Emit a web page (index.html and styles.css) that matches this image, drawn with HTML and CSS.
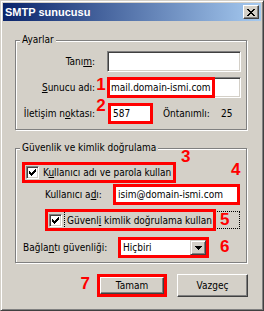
FILE: index.html
```html
<!DOCTYPE html>
<html>
<head>
    <title>SMTP sunucusu</title>
    <link rel="stylesheet" href="styles.css">
</head>
<body>
<div class="window">
    <div class="titlebar">
        <span class="title">SMTP sunucusu</span>
        <button class="close-btn">
            <svg width="8" height="7" viewBox="0 0 8 7"><path d="M0 0h2v1H0zM6 0h2v1H6zM1 1h2v1H1zM5 1h2v1H5zM2 2h4v1H2zM3 3h2v1H3zM2 4h4v1H2zM1 5h2v1H1zM5 5h2v1H5zM0 6h2v1H0zM6 6h2v1H6z" fill="#000"/></svg>
        </button>
    </div>

    <div class="dialog">
        <!-- Ayarlar -->
        <div class="group settings">
            <span class="legend">Ayarlar</span>
            <div class="row">
                <label class="field-label">Tanı<u>m</u>:</label>
                <span class="num-col"></span>
                <input type="text" class="field field-wide">
            </div>
            <div class="row">
                <label class="field-label"><u>S</u>unucu adı:</label>
                <span class="num-col"><span class="num num-1">1</span></span>
                <span class="field-wrap">
                    <input type="text" class="field field-wide" value="mail.domain-ismi.com">
                    <span class="mark-box server-mark"></span>
                </span>
            </div>
            <div class="row">
                <label class="field-label">İletişim n<u>o</u>ktası:</label>
                <span class="num-col"><span class="num num-2">2</span></span>
                <input type="text" class="field marked port-field" value="587">
                <span class="default-label">Öntanımlı:</span>
                <span>25</span>
            </div>
        </div>

        <!-- Güvenlik ve kimlik doğrulama -->
        <div class="group security">
            <span class="legend">Güvenlik ve kimlik doğrulama</span>
            <span class="num num-3">3</span>
            <span class="num num-4">4</span>

            <div class="row auth-row">
                <label class="check marked">
                    <span class="checkbox">
                        <svg width="9" height="9" viewBox="0 0 9 9"><path d="M7 1h1v1H7zM6 2h2v1H6zM1 3h1v1H1zM5 3h3v1H5zM1 4h2v1H1zM4 4h3v1H4zM1 5h5v1H1zM2 6h3v1H2zM3 7h1v1H3z" fill="#000"/></svg>
                    </span>
                    <span>K<u>u</u>llanıcı adı ve parola kullan</span>
                </label>
            </div>

            <div class="row user-row">
                <label class="user-label">Kullanıcı a<u>d</u>ı:</label>
                <input type="text" class="field marked user-field" value="isim@domain-ismi.com">
            </div>

            <div class="row secure-row">
                <span class="checkbox">
                    <svg width="9" height="9" viewBox="0 0 9 9"><path d="M7 1h1v1H7zM6 2h2v1H6zM1 3h1v1H1zM5 3h3v1H5zM1 4h2v1H1zM4 4h3v1H4zM1 5h5v1H1zM2 6h3v1H2zM3 7h1v1H3z" fill="#000"/></svg>
                </span>
                <span class="focus"><span>Güvenl<u>i</u> kimlik doğrulama kullan</span></span>
                <span class="mark-box secure-mark"></span>
                <span class="num num-5">5</span>
            </div>

            <div class="row conn-row">
                <label class="conn-label">Bağla<u>n</u>tı güvenliği:</label>
                <span class="select marked">
                    <span class="select-text">Hiçbiri</span>
                    <span class="drop-btn">
                        <svg width="7" height="4" viewBox="0 0 7 4"><path d="M0 0h7v1H0zM1 1h5v1H1zM2 2h3v1H2zM3 3h1v1H3z" fill="#000"/></svg>
                    </span>
                </span>
                <span class="num num-6">6</span>
            </div>
        </div>

        <div class="buttons">
            <span class="num num-7">7</span>
            <span class="btn-mark"><button class="btn">Tamam</button></span>
            <button class="btn">Vazgeç</button>
        </div>
    </div>
</div>
</body>
</html>
```

FILE: styles.css
```css
* {
    box-sizing: border-box;
}

body {
    margin: 0;
    background-color: #d4d0c8;
    font-family: "DejaVu Sans Condensed", "DejaVu Sans", sans-serif;
    font-stretch: condensed;
    font-size: 10px;
    color: #000;
}

u {
    text-decoration: underline;
}

.window {
    width: 264px;
    height: 311px;
    padding: 2px;
    border: 1px solid;
    border-color: #d4d0c8 #404040 #404040 #d4d0c8;
    box-shadow: inset 1px 1px 0 #fff, inset -1px -1px 0 #808080;
    background-color: #d4d0c8;
}

/* barra de titulo */
.titlebar {
    height: 18px;
    display: flex;
    align-items: center;
    justify-content: space-between;
    padding: 0 2px;
    background: linear-gradient(to right, #0a246a, #a6caf0);
}

.title {
    color: #fff;
    font-family: "Liberation Sans", Arial, sans-serif;
    font-weight: bold;
    font-size: 11px;
}

.close-btn {
    width: 16px;
    height: 14px;
    padding: 0;
    display: flex;
    align-items: center;
    justify-content: center;
    border: 1px solid;
    border-color: #fff #404040 #404040 #fff;
    box-shadow: inset -1px -1px 0 #808080;
    background-color: #d4d0c8;
}

/* grupos */
.group {
    position: relative;
    width: 232px;
    margin-left: 12px;
    border: 1px solid #808080;
    box-shadow: inset 1px 1px 0 #fff, 1px 1px 0 #fff;
}

.legend {
    position: absolute;
    top: -7px;
    left: 4px;
    padding: 0 2px;
    line-height: 12px;
    background-color: #d4d0c8;
}

.settings {
    margin-top: 19px;
    padding: 10px 0 5px 0;
}

.security {
    margin-top: 18px;
    padding: 13px 0 4px 0;
}

.row {
    position: relative;
    display: flex;
    align-items: center;
    height: 21px;
}

.settings .row + .row {
    margin-top: 5px;
}

.field-label {
    width: 79px;
    text-align: right;
}

.num-col {
    width: 12px;
    align-self: stretch;
    display: flex;
    justify-content: center;
}

/* numeros rojos */
.num {
    color: #ff0000;
    font-family: "Liberation Sans", Arial, sans-serif;
    font-weight: bold;
    font-size: 17px;
    line-height: 13px;
}

.num-1 {
    margin-top: 1px;
}

.num-2 {
    margin-top: -4px;
}

.num-3 {
    position: absolute;
    top: 1px;
    left: 165px;
}

.num-4 {
    position: absolute;
    top: 14px;
    left: 215px;
}

.num-5 {
    position: absolute;
    top: 4px;
    left: 204px;
}

.num-6 {
    align-self: flex-start;
    margin: 3px 0 0 11px;
}

.num-7 {
    margin: 3px 7px 0 0;
    align-self: flex-start;
}

/* campos */
.field {
    height: 21px;
    padding: 0 3px;
    font: inherit;
    color: #000;
    background-color: #fff;
    border: 1px solid;
    border-color: #808080 #fff #fff #808080;
    box-shadow: inset 1px 1px 0 #404040, inset -1px -1px 0 #d4d0c8;
    outline: none;
}

.field.marked {
    border: 3px solid #ff0000;
    box-shadow: none;
    padding: 0 2px;
}

.field-wide {
    width: 134px;
}

.field-wrap {
    position: relative;
    display: flex;
}

.mark-box {
    position: absolute;
    border: 3px solid #ff0000;
}

.server-mark {
    top: 0;
    left: 0;
    width: 108px;
    height: 21px;
}

.port-field {
    width: 45px;
    margin-left: 1px;
}

.default-label {
    width: 58px;
    margin-left: 10px;
}

/* casillas */
.checkbox {
    width: 13px;
    height: 13px;
    flex-shrink: 0;
    display: flex;
    align-items: center;
    justify-content: center;
    background-color: #fff;
    border: 1px solid;
    border-color: #808080 #fff #fff #808080;
    box-shadow: inset 1px 1px 0 #404040, inset -1px -1px 0 #d4d0c8;
}

.auth-row {
    padding-left: 6px;
}

.check.marked {
    display: flex;
    align-items: center;
    gap: 4px;
    width: 154px;
    height: 21px;
    padding: 0 0 0 1px;
    white-space: nowrap;
    border: 3px solid #ff0000;
}

.user-row {
    margin-top: 1px;
    padding-left: 29px;
}

.user-label {
    width: 68px;
}

.user-field {
    width: 127px;
}

.secure-row {
    margin-top: 4px;
    height: 22px;
    padding-left: 33px;
}

.focus {
    display: flex;
    align-items: center;
    width: 176px;
    height: 18px;
    margin-left: 2px;
    padding-left: 2px;
    white-space: nowrap;
    border: 1px dotted #000;
}

.secure-mark {
    top: 0;
    left: 29px;
    width: 171px;
    height: 22px;
}

.conn-row {
    margin-top: 6px;
    padding-left: 7px;
}

.conn-label {
    width: 95px;
}

.select {
    display: flex;
    width: 91px;
    height: 21px;
    background-color: #fff;
    border: 3px solid #ff0000;
}

.select-text {
    flex: 1;
    display: flex;
    align-items: center;
    padding-left: 2px;
}

.drop-btn {
    width: 16px;
    display: flex;
    align-items: center;
    justify-content: center;
    background-color: #d4d0c8;
    border: 1px solid;
    border-color: #d4d0c8 #404040 #404040 #d4d0c8;
    box-shadow: inset 1px 1px 0 #fff, inset -1px -1px 0 #808080;
}

/* botones */
.buttons {
    display: flex;
    justify-content: flex-end;
    align-items: center;
    margin-top: 11px;
    padding-right: 13px;
}

.btn {
    width: 71px;
    height: 23px;
    padding: 0;
    font: inherit;
    color: #000;
    background-color: #d4d0c8;
    border: 1px solid;
    border-color: #fff #404040 #404040 #fff;
    box-shadow: inset -1px -1px 0 #808080;
}

.btn-mark {
    display: flex;
    width: 70px;
    height: 23px;
    margin-right: 10px;
    border: 3px solid #ff0000;
}

.btn-mark .btn {
    width: 100%;
    height: 100%;
}
```
